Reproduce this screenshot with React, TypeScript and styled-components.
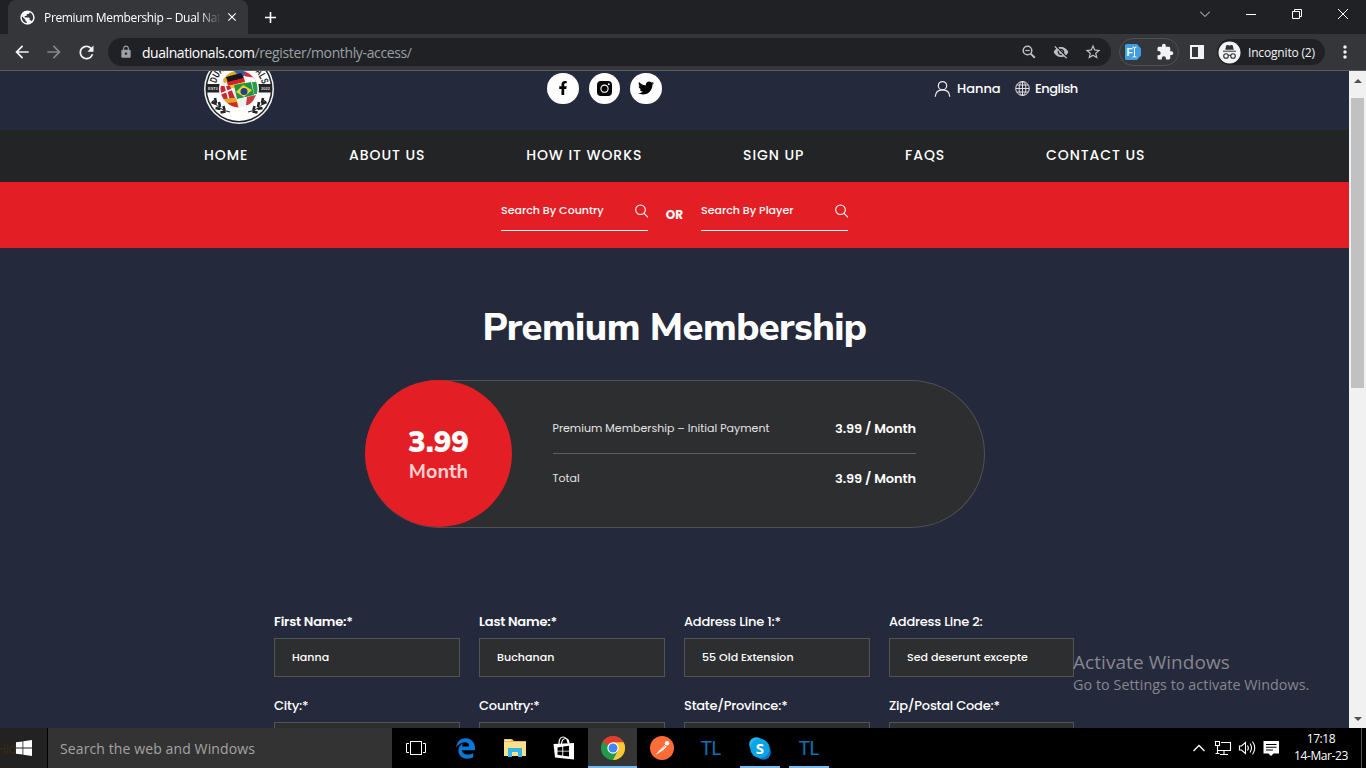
import React from 'react';
import styled, { createGlobalStyle } from 'styled-components';
import {
  MdArrowBack, MdArrowForward, MdRefresh, MdLock, MdVisibilityOff,
  MdStarBorder, MdExtension, MdMoreVert, MdPublic, MdClose, MdAdd,
} from 'react-icons/md';
import { FaFacebookF, FaTwitter, FaEdgeLegacy } from 'react-icons/fa';

const GlobalStyle = createGlobalStyle`
  * { box-sizing: border-box; }
  html, body { margin: 0; padding: 0; background: #000; overflow: hidden; }
  svg { display: block; flex: none; }
`;

const ui = `'Segoe UI', 'Open Sans', 'Noto Sans', sans-serif`;
const poppins = `Poppins, Inter, 'Liberation Sans', sans-serif`;
const avenir = `'Nunito Sans', Lato, 'Open Sans', sans-serif`;

const Screen = styled.div`
  width: 1366px;
  height: 768px;
  display: flex;
  flex-direction: column;
  overflow: hidden;
  font-family: ${ui};
  white-space: nowrap;
`;

/* ---------- browser chrome ---------- */

const TabStrip = styled.div`
  height: 34px;
  flex: none;
  background: #202124;
  display: flex;
  padding-left: 8px;
  color: #fff;
`;

const Tab = styled.div`
  width: 240px;
  height: 34px;
  background: #35363a;
  border-radius: 8px 8px 0 0;
  display: flex;
  align-items: center;
  padding: 0 8px 0 11px;
  font-size: 12px;
`;

const TabTitle = styled.div`
  width: 177px;
  margin: 0 4px 0 8px;
  overflow: hidden;
  letter-spacing: -0.34px;
  mask-image: linear-gradient(90deg, #000 155px, transparent 177px);
`;

const NewTab = styled.div`
  width: 44px;
  display: flex;
  align-items: center;
  justify-content: center;
`;

const WindowButtons = styled.div`
  margin-left: auto;
  display: flex;
  height: 28px;
`;

const WindowButton = styled.div`
  width: 46px;
  display: flex;
  align-items: center;
  justify-content: center;
`;

const Toolbar = styled.div`
  height: 37px;
  flex: none;
  background: #35363a;
  border-bottom: 1px solid #5c5d60;
  display: flex;
  align-items: center;
  padding-left: 6px;
  color: #f1f3f4;
`;

const ToolButton = styled.div<{ $dim?: boolean; $w?: number }>`
  width: ${p => p.$w ?? 32}px;
  height: 28px;
  display: flex;
  align-items: center;
  justify-content: center;
  color: ${p => (p.$dim ? '#85878a' : '#f1f3f4')};
`;

const Omnibox = styled.div`
  width: 1003px;
  height: 28px;
  margin-left: 6px;
  background: #202124;
  border-radius: 14px;
  display: flex;
  align-items: center;
  padding: 0 2px 0 11px;
  color: #9aa0a6;
  font-size: 14px;
`;

const Url = styled.div`
  margin-left: 9px;
  flex: 1;
  letter-spacing: -0.37px;
  b { font-weight: 400; color: #fff; letter-spacing: -0.45px; }
`;

const Extensions = styled.div`
  margin-left: 8px;
  width: 60px;
  height: 28px;
  border: 1px solid #505154;
  border-radius: 14px;
  display: flex;
  align-items: center;
  justify-content: space-between;
  padding: 0 4px 0 5px;
`;

const Incognito = styled.div`
  width: 108px;
  height: 26px;
  margin-left: 2px;
  background: #202124;
  border-radius: 13px;
  display: flex;
  align-items: center;
  padding-left: 1px;
  font-size: 12px;
  letter-spacing: -0.17px;
  svg { margin-right: 7px; }
`;

/* ---------- web page ---------- */

const Viewport = styled.div`
  height: 657px;
  flex: none;
  display: flex;
`;

const Page = styled.div`
  width: 1349px;
  height: 657px;
  overflow: hidden;
  background: #25293c;
  color: #fff;
  font-family: ${poppins};
`;

const Scrollbar = styled.div`
  width: 17px;
  background: #f1f1f1;
  display: flex;
  flex-direction: column;
  align-items: center;
  justify-content: space-between;
`;

const Thumb = styled.div`
  width: 13px;
  height: 290px;
  margin-bottom: auto;
  background: #c1c1c1;
`;

const ScrollArrow = styled.div<{ $down?: boolean }>`
  height: ${p => (p.$down ? 18 : 27)}px;
  display: flex;
  padding-top: ${p => (p.$down ? 7 : 8)}px;
`;

const Header = styled.header`
  height: 59px;
  display: flex;
  align-items: flex-start;
  padding-left: 204px;
  overflow: hidden;
  font-size: 13px;
  font-weight: 500;
`;

const LogoBox = styled.div`
  margin-top: -17px;
`;

const Socials = styled.div`
  display: flex;
  gap: 10px;
  margin: 1.5px 0 0 273px;
`;

const SocialButton = styled.div`
  width: 31.5px;
  height: 31.5px;
  border-radius: 50%;
  background: #fff;
  color: #050505;
  display: flex;
  align-items: center;
  justify-content: center;
`;

const Account = styled.div`
  display: flex;
  align-items: center;
  height: 35px;
  margin-left: 272.5px;
`;

const AccountItem = styled.div<{ $gap: number; $w?: number; $ls?: number }>`
  display: flex;
  align-items: center;
  gap: ${p => p.$gap}px;
  width: ${p => (p.$w ? `${p.$w}px` : 'auto')};
  letter-spacing: ${p => p.$ls ?? 0}px;
`;

const Nav = styled.nav`
  height: 52px;
  background: #222426;
  display: flex;
  justify-content: space-between;
  align-items: center;
  padding: 0 203.5px 2px 204px;
  font-size: 14px;
  font-weight: 500;
  letter-spacing: 0.95px;
`;

const SearchBar = styled.div`
  height: 66px;
  background: #e31e24;
  display: flex;
  justify-content: center;
  padding-top: 13px;
  font-size: 11px;
  font-weight: 500;
  letter-spacing: 0.02px;
`;

const SearchField = styled.div`
  width: 147px;
  height: 36px;
  border-bottom: 1px solid #fff;
  display: flex;
  justify-content: space-between;
  padding-bottom: 4px;
  align-items: center;
`;

const Or = styled.div`
  width: 53px;
  padding-top: 11px;
  text-align: center;
  font-weight: 700;
  font-size: 12px;
`;

const Title = styled.h1`
  margin: 0;
  padding-top: 56px;
  height: 132px;
  text-align: center;
  font: 800 38px/48px ${avenir};
  letter-spacing: -0.55px;
`;

const PriceCard = styled.section`
  width: 620px;
  height: 148px;
  margin: 0 auto 0 365px;
  border: 1px solid #505153;
  border-left: 0;
  border-radius: 74px;
  background: #2d2e30;
  display: flex;
  align-items: flex-start;
`;

const PriceCircle = styled.div`
  width: 147px;
  height: 147px;
  margin-top: -1px;
  border-radius: 50%;
  background: #e31e24;
  display: flex;
  flex-direction: column;
  align-items: center;
  font-family: ${avenir};
`;

const Amount = styled.div`
  padding-top: 45px;
  font-weight: 900;
  font-size: 29.5px;
  line-height: 35px;
`;

const Period = styled.div`
  font-weight: 700;
  font-size: 19.8px;
  line-height: 24px;
  color: #fbd0d1;
`;

const Rows = styled.div`
  width: 363.5px;
  margin: 22px 0 0 40.5px;
`;

const Row = styled.div<{ $line?: boolean }>`
  height: ${p => (p.$line ? 51 : 50)}px;
  padding-bottom: ${p => (p.$line ? 0 : 1)}px;
  display: flex;
  justify-content: space-between;
  align-items: center;
  border-bottom: 1px solid ${p => (p.$line ? '#5e5f61' : 'transparent')};
  font-size: 11px;
  letter-spacing: 0.02px;
  color: #e4e4e5;
`;

const RowPrice = styled.span`
  font-size: 13px;
  font-weight: 600;
  color: #fff;
  letter-spacing: -0.1px;
  padding-top: 1px;
`;

const Form = styled.div`
  margin: 82px 0 0 274px;
  width: 800px;
  display: grid;
  grid-template-columns: repeat(3, 186px) 185px;
  column-gap: 19px;
`;

const Field = styled.div`
  height: 84px;
`;

const FieldLabel = styled.div<{ $ls: number; $bold?: boolean }>`
  height: 28px;
  line-height: 23px;
  font-size: 13px;
  font-weight: ${p => (p.$bold ? 600 : 500)};
  letter-spacing: ${p => p.$ls}px;
`;

const Input = styled.div`
  height: 39px;
  border: 1px solid #535352;
  background: #2d2e30;
  padding-left: 17px;
  line-height: 37px;
  font-size: 11px;
  font-weight: 500;
  letter-spacing: 0.04px;
`;

const Watermark = styled.div`
  position: absolute;
  left: 1073px;
  top: 649px;
  color: #85878e;
  font: 400 19px/26px ${ui};
  letter-spacing: 0.06px;
  white-space: nowrap;
`;

const WatermarkNote = styled.div`
  font-size: 14.3px;
  line-height: 20px;
`;

/* ---------- taskbar ---------- */

const Taskbar = styled.div`
  height: 40px;
  flex: none;
  background: #000;
  display: flex;
  color: #fff;
`;

const Start = styled.div`
  width: 47px;
  background: #222;
  display: flex;
  align-items: center;
  overflow: hidden;
  color: #3a2b12;
  font-size: 14px;
`;

const Hidden = styled.span`
  width: 16px;
  overflow: hidden;
  display: flex;
  justify-content: flex-end;
  letter-spacing: -0.8px;
`;

const TaskSearch = styled.div`
  width: 344px;
  margin-left: 1px;
  background: #333;
  color: #a3a3a3;
  font-size: 14px;
  letter-spacing: 0.11px;
  line-height: 41px;
  padding-left: 12px;
`;

const Task = styled.div<{ $active?: boolean; $bar?: boolean }>`
  width: 49px;
  height: 40px;
  padding: 0 4px;
  display: flex;
  align-items: center;
  justify-content: center;
  background: ${p => (p.$active ? '#353535' : 'transparent')};
  background-image: ${p => (p.$bar || p.$active ? 'linear-gradient(#76b9ed, #76b9ed)' : 'none')};
  background-repeat: no-repeat;
  background-position: bottom center;
  background-size: ${p => (p.$active ? 49 : 40)}px 2px;
`;

const TL = styled.span`
  font: 400 19px/20px Lato, sans-serif;
  color: #0f70b4;
  letter-spacing: -0.8px;
`;

const Tray = styled.div`
  margin-left: auto;
  display: flex;
  align-items: center;
`;

const Clock = styled.div`
  width: 64px;
  margin: 0 8px 0 9px;
  text-align: center;
  font-size: 12px;
  line-height: 17px;
  letter-spacing: -0.4px;
  padding-bottom: 2px;
`;

const ShowDesktop = styled.div`
  width: 5px;
  height: 40px;
  border-left: 1px solid #555;
`;

const Logo = () => (
  <svg width="70" height="70" viewBox="0 0 70 70">
    <defs>
      <clipPath id="ball"><circle cx="35" cy="35" r="18.500" /></clipPath>
      <path id="arc" d="M11.500 35a23.500 23.500 0 0 1 47 0" />
    </defs>
    <circle cx="35" cy="35" r="35" fill="#f4f4f4" />
    <circle cx="35" cy="35" r="33.500" fill="#222426" />
    <circle cx="35" cy="35" r="32" fill="#fff" />
    <path d="M2 30h66v8.500H2z" fill="#222426" />
    <text fontFamily="Liberation Sans" fontWeight="700" fontSize="10" fill="#1b1c1e">
      <textPath href="#arc" startOffset="5.500" textLength="63" lengthAdjust="spacingAndGlyphs">DUAL NATIONALS</textPath>
    </text>
    <g fontFamily="Liberation Sans" fontWeight="700" fontSize="4" fill="#d8d8d8">
      <text x="4" y="36">EST0</text>
      <text x="57" y="36">2022</text>
    </g>
    <circle cx="35" cy="35" r="20" fill="#fff" />
    <g clipPath="url(#ball)">
      <rect x="16" y="16" width="38" height="38" fill="#eee" />
      <path d="M16 16h20v8l-16 5z" fill="#e0a72c" />
      <path d="M28 15h15l-4 11z" fill="#3359a8" />
      <path d="M41 15l14 5v10l-14-3z" fill="#d92b35" />
      <path d="M38 22l15 2-2 6-11-1z" fill="#fff" />
      <path d="M22 23l15-4 3 5-16 5z" fill="#181818" />
      <path d="M23 28l17-4 1 4-17 4z" fill="#d81e28" />
      <path d="M24 32l17-4 1 3-17 4z" fill="#f3c519" />
      <path d="M15 32h11l5 12-13 2z" fill="#c82536" />
      <path d="M16 40l13-5M21 31l4 15" stroke="#fff" strokeWidth="1.500" />
      <path d="M30 31l17-3 3 13-17 4z" fill="#1d9344" />
      <path d="M32 38l7-7 9 5-8 7z" fill="#f4d327" />
      <circle cx="40" cy="37.500" r="3.500" fill="#22418f" />
      <path d="M48 28h7v12h-5z" fill="#2a9b4b" />
      <path d="M18 45l14-1 3 10H20z" fill="#e4a522" />
      <path d="M24 49l9-1 1 6h-8z" fill="#cf2831" />
      <path d="M34 45l9-2-2 11h-6z" fill="#f1f1f1" />
      <path d="M43 43l9-2-5 10h-5z" fill="#c93b3e" />
    </g>
    <g stroke="#222426" strokeWidth="1" fill="none">
      <path d="M9 46q5 10 17 12M61 46q-5 10-17 12" />
      <path
        d="M11 44l1 5M7.500 48l5 2M15 48l1 5M11.500 54l5 1M19.500 52l1 4M16.500 58.500l5-1M59 44l-1 5M62.500 48l-5 2M55 48l-1 5M58.500 54l-5 1M50.500 52l-1 4M53.500 58.500l-5-1"
        strokeWidth="2.600"
      />
    </g>
  </svg>
);

const Magnifier = () => (
  <svg width="13.500" height="14" viewBox="0 0 14 14" fill="none" stroke="#fff" strokeWidth="1.100">
    <circle cx="5.700" cy="5.700" r="5" />
    <path d="M9.400 9.400L13.600 13.600" />
  </svg>
);

const ZoomOutIcon = () => (
  <svg width="14" height="14" viewBox="0 0 14 14" fill="none" stroke="#bdc1c6" strokeWidth="1.500">
    <circle cx="5.500" cy="5.500" r="4.300" />
    <path d="M3.300 5.500h4.400" strokeWidth="1.200" />
    <path d="M8.600 8.600l4.200 4.200" strokeWidth="2" />
  </svg>
);

const Instagram = () => (
  <svg width="15" height="15" viewBox="0 0 15 15">
    <rect width="15" height="15" rx="4" fill="#050505" />
    <circle cx="7.500" cy="7.700" r="3.600" fill="none" stroke="#fff" strokeWidth="1.100" />
    <circle cx="11.800" cy="3.200" r="1" fill="#fff" />
  </svg>
);

const UserIcon = () => (
  <svg width="17" height="18" viewBox="0 0 18 18" fill="none" stroke="#eee" strokeWidth="1.300">
    <circle cx="9" cy="5.500" r="4.400" />
    <path d="M1.300 17.200c.3-4.300 3-7.300 7.700-7.300s7.400 3 7.700 7.300" />
  </svg>
);

const GlobeIcon = () => (
  <svg width="15" height="16" viewBox="0 0 15 16" fill="none" stroke="#ddd" strokeWidth="1">
    <ellipse cx="7.500" cy="7.500" rx="6.800" ry="7" />
    <ellipse cx="7.500" cy="7.500" rx="3.400" ry="7" />
    <path d="M7.500.5v14M.8 7.500h13.400M1.900 4h11.200M1.900 11h11.200" />
  </svg>
);

const FiIcon = () => (
  <svg width="16" height="16" viewBox="0 0 16 16">
    <path d="M1.500 0H12l4 4.500v7L12 16H1.500A1.500 1.500 0 0 1 0 14.500V1.500A1.500 1.500 0 0 1 1.500 0z" fill="#3f9fe0" />
    <text x="1.600" y="12" fontFamily="Liberation Sans" fontWeight="700" fontSize="10" fill="#fff">F</text>
    <path d="M7.500 3q2 0 2 1.200V12q0 1.200-2 1.200M11.500 3q-2 0-2 1.200M9.500 12q0 1.200 2 1.200" fill="none" stroke="#fff" />
  </svg>
);

const SpyIcon = () => (
  <svg width="23" height="23" viewBox="0 0 23 23">
    <circle cx="11.500" cy="11.500" r="11" fill="#f1f3f4" />
    <path d="M8.300 4.500q.3-.8 1-.5l2.200.5 2.200-.5q.7-.3 1 .5l1.100 4.200H7.200z" fill="#303134" />
    <path d="M5 9.700h13v1H5z" fill="#303134" />
    <g fill="none" stroke="#303134" strokeWidth="1.100">
      <circle cx="8" cy="15" r="2.300" /><circle cx="15" cy="15" r="2.300" />
      <path d="M10.300 14.600q1.200-.7 2.400 0" />
    </g>
  </svg>
);

const WindowsLogo = () => (
  <svg width="16" height="16" viewBox="0 0 16 16" fill="#fff">
    <path d="M0 2.300L6.500 1.400v6.200H0zM7.300 1.300L16 0v7.600H7.300zM0 8.400h6.500v6.200L0 13.700zM7.300 8.400H16V16l-8.700-1.300z" />
  </svg>
);

const TaskView = () => (
  <svg width="21" height="14" viewBox="0 0 21 14" fill="none" stroke="#fff">
    <rect x="4.500" y=".5" width="11" height="13" />
    <path d="M3 2.500H.5v9H3M17 2.500h2.500v9H17" />
  </svg>
);

const FolderIcon = () => (
  <svg width="22" height="20" viewBox="0 0 22 20">
    <path d="M0 1h8l2 2h12v15H0z" fill="#e9b949" />
    <path d="M0 4h22v14H0z" fill="#fbe08d" />
    <path d="M1 1.800h6v1H1z" fill="#fff" />
    <path d="M4 10h14v9h-4v-5H8v5H4z" fill="#35b5ea" />
  </svg>
);

const StoreIcon = () => (
  <svg width="22" height="24" viewBox="0 0 22 24">
    <path d="M6 8Q6 1 10 1t5 6M8.500 8Q9 2.500 12.500 2.500T16 8" fill="none" stroke="#fff" strokeWidth="1.200" />
    <path d="M.5 8L21 7v16.500L2 21.500z" fill="#fff" />
    <path d="M4.500 11.500l4.800-.7v3.900H4.500zM10.200 10.600l5.800-.8v4.900h-5.800zM4.500 15.600h4.800v3.900l-4.800-.7zM10.200 15.600H16v4.900l-5.800-.8z" fill="#000" />
  </svg>
);

const ChromeIcon = () => (
  <svg width="24" height="24" viewBox="0 0 24 24">
    <circle cx="12" cy="12" r="12" fill="#219a4c" />
    <path d="M12 12L1.600 6A12 12 0 0 1 22.400 6z" fill="#e33b2e" />
    <path d="M12 6.300h10.600A12 12 0 0 1 12 24l4.900-9.200z" fill="#fcc934" />
    <circle cx="12" cy="12" r="5.700" fill="#fff" />
    <circle cx="12" cy="12" r="4.500" fill="#4285f4" />
  </svg>
);

const PostmanIcon = () => (
  <svg width="24" height="24" viewBox="0 0 24 24">
    <circle cx="12" cy="12" r="12" fill="#ff6c37" />
    <path d="M5.500 19l5.500-6.500 3.900-3.500 1.700 1.700-3.900 3.800z" fill="#fff" />
    <circle cx="17" cy="7.200" r="2.200" fill="#fff" />
    <path d="M10.500 13.500l5-4" stroke="#ff6c37" strokeWidth=".7" />
  </svg>
);

const SkypeIcon = () => (
  <svg width="22" height="23" viewBox="0 0 22 23">
    <circle cx="7.500" cy="7.500" r="7.300" fill="#28b5f0" />
    <circle cx="14.500" cy="15.500" r="7.300" fill="#0778c9" />
    <circle cx="11" cy="11.500" r="9.700" fill="#08a4e6" />
    <text x="11" y="17" textAnchor="middle" fontFamily="Open Sans" fontWeight="700" fontSize="15" fill="#fff">S</text>
  </svg>
);

const TrayIcons = () => (
  <svg width="88" height="18" viewBox="0 0 88 18" fill="none" stroke="#fff" strokeWidth="1.100">
    <path d="M1.500 12L7 6.500l5.500 5.500" strokeWidth="1.300" />
    <path d="M29 3.500h9.500v8H26M32 12v3.500M28 15.500h8M23.500 2.500h4v4h-4zM25.500 6.500v8M23.500 14.500h4" />
    <path d="M47.500 7h2l4-3.500v11l-4-3.500h-2zM55.500 6.500q1.700 2.500 0 5M58 4.500q3 4.500 0 9M60.500 2.500q4.500 6.500 0 13" />
    <path d="M71.500 2H87v12.500h-5.500L79 17l-2.500-2.500h-5z" fill="#fff" stroke="none" />
    <path d="M74 5.500h10.500M74 8.300h10.500M74 11h7" stroke="#000" />
  </svg>
);

const navItems = ['HOME', 'ABOUT US', 'HOW IT WORKS', 'SIGN UP', 'FAQS', 'CONTACT US'];

const fields: { label: string; value: string; ls: number; bold?: boolean }[] = [
  { label: 'First Name:*', value: 'Hanna', ls: -0.2, bold: true },
  { label: 'Last Name:*', value: 'Buchanan', ls: -0.2, bold: true },
  { label: 'Address Line 1:*', value: '55 Old Extension', ls: -0.22 },
  { label: 'Address Line 2:', value: 'Sed deserunt excepte', ls: -0.22 },
  { label: 'City:*', value: '', ls: -0.2 },
  { label: 'Country:*', value: '', ls: -0.2 },
  { label: 'State/Province:*', value: '', ls: -0.22 },
  { label: 'Zip/Postal Code:*', value: '', ls: -0.22 },
];

export default function App() {
  return (
    <Screen>
      <GlobalStyle />
      <TabStrip>
        <Tab>
          <MdPublic size={17} />
          <TabTitle>Premium Membership – Dual Nationals</TabTitle>
          <MdClose size={14} />
        </Tab>
        <NewTab><MdAdd size={19} /></NewTab>
        <WindowButtons>
          <WindowButton>
            <svg width="10" height="6" fill="none" stroke="#ddd"><path d="M0 .5l5 5 5-5" /></svg>
          </WindowButton>
          <WindowButton>
            <svg width="10" height="1"><rect width="10" height="1" fill="#fff" /></svg>
          </WindowButton>
          <WindowButton>
            <svg width="10" height="10" fill="none" stroke="#fff"><path d="M.5 2.500h7v7h-7zM2.500 2.500v-2h7v7h-2" /></svg>
          </WindowButton>
          <WindowButton>
            <svg width="10" height="10" stroke="#fff"><path d="M0 0l10 10M10 0L0 10" /></svg>
          </WindowButton>
        </WindowButtons>
      </TabStrip>
      <Toolbar>
        <ToolButton><MdArrowBack size={20} /></ToolButton>
        <ToolButton $dim><MdArrowForward size={20} /></ToolButton>
        <ToolButton><MdRefresh size={21} /></ToolButton>
        <Omnibox>
          <MdLock size={14} />
          <Url><b>dualnationals.com</b>/register/monthly-access/</Url>
          <ToolButton><ZoomOutIcon /></ToolButton>
          <ToolButton><MdVisibilityOff size={16} color="#bdc1c6" /></ToolButton>
          <ToolButton><MdStarBorder size={18} color="#bdc1c6" /></ToolButton>
        </Omnibox>
        <Extensions>
          <FiIcon />
          <MdExtension size={18} />
        </Extensions>
        <ToolButton $w={36}>
          <svg width="14" height="14"><path d="M0 0h14v14H0zM2 2v10h6V2z" fill="#f1f3f4" fillRule="evenodd" /></svg>
        </ToolButton>
        <Incognito><SpyIcon />Incognito (2)</Incognito>
        <ToolButton $w={40}><MdMoreVert size={20} /></ToolButton>
      </Toolbar>

      <Viewport>
        <Page>
          <Header>
            <LogoBox><Logo /></LogoBox>
            <Socials>
              <SocialButton><FaFacebookF size={14} /></SocialButton>
              <SocialButton><Instagram /></SocialButton>
              <SocialButton><FaTwitter size={16} /></SocialButton>
            </Socials>
            <Account>
              <AccountItem $gap={6} $w={80.5}><UserIcon />Hanna</AccountItem>
              <AccountItem $gap={5.5} $ls={-0.5}><GlobeIcon />English</AccountItem>
            </Account>
          </Header>
          <Nav>
            {navItems.map(t => <span key={t}>{t}</span>)}
          </Nav>
          <SearchBar>
            <SearchField><span>Search By Country</span><Magnifier /></SearchField>
            <Or>OR</Or>
            <SearchField><span>Search By Player</span><Magnifier /></SearchField>
          </SearchBar>
          <Title>Premium Membership</Title>
          <PriceCard>
            <PriceCircle>
              <Amount>3.99</Amount>
              <Period>Month</Period>
            </PriceCircle>
            <Rows>
              <Row $line>
                <span>Premium Membership – Initial Payment</span>
                <RowPrice>3.99 / Month</RowPrice>
              </Row>
              <Row>
                <span>Total</span>
                <RowPrice>3.99 / Month</RowPrice>
              </Row>
            </Rows>
          </PriceCard>
          <Form>
            {fields.map(f => (
              <Field key={f.label}>
                <FieldLabel $ls={f.ls} $bold={f.bold}>{f.label}</FieldLabel>
                <Input>{f.value}</Input>
              </Field>
            ))}
          </Form>
        </Page>
        <Scrollbar>
          <ScrollArrow><svg width="8" height="4"><path d="M0 4l4-4 4 4z" fill="#505050" /></svg></ScrollArrow>
          <Thumb />
          <ScrollArrow $down><svg width="8" height="4"><path d="M0 0l4 4 4-4z" fill="#505050" /></svg></ScrollArrow>
        </Scrollbar>
      </Viewport>

      <Watermark>
        Activate Windows
        <WatermarkNote>Go to Settings to activate Windows.</WatermarkNote>
      </Watermark>

      <Taskbar>
        <Start><Hidden>Hid</Hidden><WindowsLogo /></Start>
        <TaskSearch>Search the web and Windows</TaskSearch>
        <Task><TaskView /></Task>
        <Task><FaEdgeLegacy size={21} color="#0a78d6" /></Task>
        <Task><FolderIcon /></Task>
        <Task><StoreIcon /></Task>
        <Task $active><ChromeIcon /></Task>
        <Task><PostmanIcon /></Task>
        <Task><TL>TL</TL></Task>
        <Task $bar><SkypeIcon /></Task>
        <Task $bar><TL>TL</TL></Task>
        <Tray>
          <TrayIcons />
          <Clock>17:18<br />14-Mar-23</Clock>
          <ShowDesktop />
        </Tray>
      </Taskbar>
    </Screen>
  );
}
